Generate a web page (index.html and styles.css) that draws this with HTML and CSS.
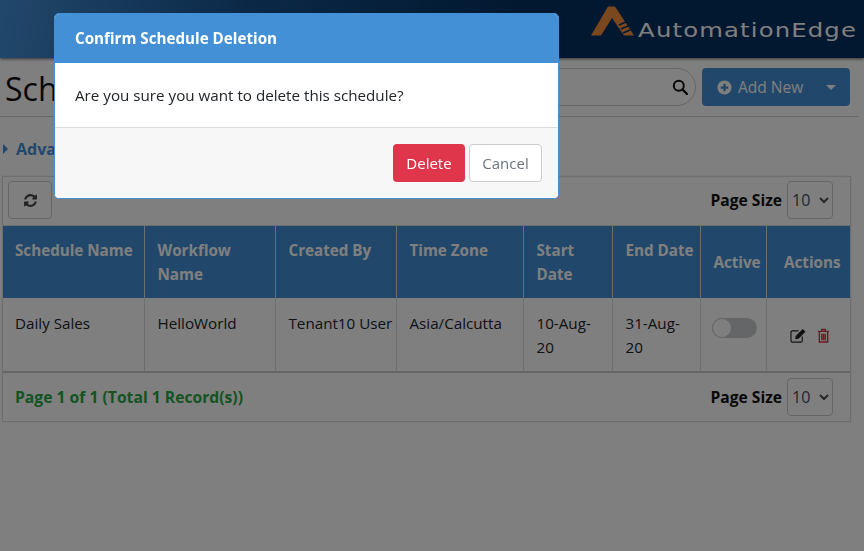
FILE: index.html
```html
<!DOCTYPE html>
<html lang="en">

<head>
    <meta charset="UTF-8">
    <title>Schedules</title>
    <link rel="stylesheet" href="styles.css">
</head>

<body>
    <header class="topbar">
        <div class="logo">
            <svg class="logo-mark" viewBox="0 0 44 30" width="44" height="30">
                <path d="M0 29.500 L17 0.500 H24 L43 29.500 H33 L21 12 L10 29.500 Z" fill="#f58f3c" />
                <path d="M28 19 L35 16 M30 23 L37 20 M32 27 L39 24" stroke="#023060" stroke-width="1.500" />
            </svg>
            <span class="logo-text">AutomationEdge</span>
        </div>
    </header>

    <main class="content">
        <div class="title-row">
            <h1>Schedules</h1>
            <div class="title-tools">
                <div class="search-box">
                    <svg viewBox="0 0 16 16" width="16" height="16">
                        <circle cx="6.800" cy="6.800" r="5" fill="none" stroke="#111" stroke-width="2" />
                        <path d="M10.500 10.500 L15 15" stroke="#111" stroke-width="2.400" stroke-linecap="round" />
                    </svg>
                </div>
                <button class="add-btn">
                    <svg viewBox="0 0 16 16" width="15" height="15">
                        <circle cx="8" cy="8" r="7.500" fill="#fff" />
                        <path d="M8 4 V12 M4 8 H12" stroke="#4390d6" stroke-width="2.400" />
                    </svg>
                    <span class="add-label">Add New</span>
                    <span class="caret"></span>
                </button>
            </div>
        </div>

        <div class="advanced"><span class="caret-right"></span>Advanced Search</div>

        <section class="panel">
            <div class="panel-bar">
                <button class="refresh-btn">
                    <svg viewBox="0 0 1792 1792" width="15" height="15">
                        <path fill="#444" d="M1639 1056q0 5-1 7-64 268-268 434.5t-478 166.5q-146 0-282.5-55t-243.5-157l-129 129q-19 19-45 19t-45-19-19-45v-448q0-26 19-45t45-19h448q26 0 45 19t19 45-19 45l-137 137q71 66 161 102t187 36q134 0 250-65t186-179q11-17 53-117 8-23 30-23h192q13 0 22.5 9.5t9.5 22.5zm25-800v448q0 26-19 45t-45 19h-448q-26 0-45-19t-19-45 19-45l138-138q-148-137-349-137-134 0-250 65t-186 179q-11 17-53 117-8 23-30 23h-199q-13 0-22.5-9.5t-9.5-22.5v-7q65-268 270-434.5t480-166.5q146 0 284 55.5t245 156.5l130-129q19-19 45-19t45 19 19 45z" />
                    </svg>
                </button>
                <div class="page-size">
                    <label>Page Size</label>
                    <select class="size-select">
                        <option>10</option>
                    </select>
                </div>
            </div>

            <table class="grid">
                <colgroup>
                    <col class="c-name">
                    <col class="c-flow">
                    <col class="c-user">
                    <col class="c-zone">
                    <col class="c-start">
                    <col class="c-end">
                    <col class="c-active">
                    <col class="c-actions">
                </colgroup>
                <thead>
                    <tr>
                        <th class="top">Schedule Name</th>
                        <th class="top">Workflow<br>Name</th>
                        <th class="top">Created By</th>
                        <th class="top">Time Zone</th>
                        <th class="top">Start<br>Date</th>
                        <th class="top">End Date</th>
                        <th class="mid">Active</th>
                        <th class="mid">Actions</th>
                    </tr>
                </thead>
                <tbody>
                    <tr>
                        <td>Daily Sales</td>
                        <td>HelloWorld</td>
                        <td class="nowrap">Tenant10 User</td>
                        <td>Asia/Calcutta</td>
                        <td>10-Aug-20</td>
                        <td>31-Aug-20</td>
                        <td class="cell-toggle"><span class="toggle"><span class="knob"></span></span></td>
                        <td class="cell-actions">
                            <svg viewBox="0 0 18 16" width="17" height="15">
                                <path d="M13 9 V13.500 A1.500 1.500 0 0 1 11.500 15 H2.500 A1.500 1.500 0 0 1 1 13.500 V4.500 A1.500 1.500 0 0 1 2.500 3 H9" fill="none" stroke="#222" stroke-width="1.200" />
                                <path d="M6 8.500 L13.500 1 L16.500 4 L9 11.500 L5.500 12 Z" fill="#222" />
                            </svg>
                            <svg viewBox="0 0 14 16" width="13" height="15">
                                <path d="M1 3.500 H13 M5 3 V1.500 H9 V3 M2.500 4 V15 H11.500 V4 M5.200 6 V13 M7 6 V13 M8.800 6 V13" fill="none" stroke="#dc3545" stroke-width="1.500" />
                            </svg>
                        </td>
                    </tr>
                </tbody>
            </table>

            <div class="panel-foot">
                <span class="records">Page 1 of 1 (Total 1 Record(s))</span>
                <div class="page-size">
                    <label>Page Size</label>
                    <select class="size-select">
                        <option>10</option>
                    </select>
                </div>
            </div>
        </section>
    </main>

    <div class="overlay">
        <div class="modal">
            <div class="modal-head">Confirm Schedule Deletion</div>
            <div class="modal-body">Are you sure you want to delete this schedule?</div>
            <div class="modal-foot">
                <button class="btn btn-danger">Delete</button>
                <button class="btn btn-plain">Cancel</button>
            </div>
        </div>
    </div>
</body>

</html>
```

FILE: styles.css
```css
* {
    box-sizing: border-box;
    margin: 0;
    padding: 0;
}

html,
body {
    height: 100%;
    overflow: hidden;
}

body {
    font-family: 'Open Sans', 'Noto Sans', sans-serif;
    font-size: 15.2px;
    line-height: 24px;
    color: #212529;
    background-color: #fff;
}

button,
select {
    font-family: inherit;
}

.topbar {
    height: 58px;
    display: flex;
    justify-content: flex-end;
    background: linear-gradient(100deg, #4390d6 0%, #17528f 28%, #023060 60%, #023060 100%);
    box-shadow: 0 1px 3px rgba(0, 0, 0, 0.6);
}

.logo {
    display: flex;
    align-items: flex-start;
    padding: 6px 7px 0 0;
}

.logo-text {
    margin: 9px 0 0 51px;
    font-family: 'DejaVu Sans', sans-serif;
    font-size: 19px;
    line-height: 30px;
    letter-spacing: 0.9px;
    color: #fff;
    transform: scaleX(1.28);
    transform-origin: right center;
}

.content {
    padding: 10px 6px 0 2px;
}

.title-row {
    height: 49px;
    display: flex;
    justify-content: space-between;
    align-items: flex-start;
    margin-left: -2px;
    padding: 0 8px 0 5px;
    border-bottom: 1px solid #ccc;
}

h1 {
    font-size: 32px;
    font-weight: 400;
    line-height: 42px;
    color: #111;
}

.title-tools {
    display: flex;
    gap: 6px;
}

.search-box {
    width: 300px;
    height: 38px;
    display: flex;
    align-items: center;
    justify-content: flex-end;
    padding-right: 7px;
    border: 1px solid #ccc;
    border-radius: 19px;
}

.add-btn {
    width: 148px;
    height: 38px;
    display: flex;
    align-items: center;
    padding: 0 14px 0 15px;
    border: none;
    border-radius: 4px;
    background-color: #4390d6;
    color: #fff;
    font-size: 15.500px;
}

.add-label {
    margin-left: 6px;
    flex: 1;
    text-align: left;
}

.caret {
    width: 0;
    height: 0;
    border-left: 5px solid transparent;
    border-right: 5px solid transparent;
    border-top: 5px solid #fff;
}

.advanced {
    height: 59px;
    padding-top: 20px;
    margin-left: 1px;
    font-size: 16px;
    font-weight: 700;
    color: #4390d6;
}

.caret-right {
    display: inline-block;
    margin-right: 8px;
    vertical-align: 1px;
    border-top: 5px solid transparent;
    border-bottom: 5px solid transparent;
    border-left: 5px solid #4390d6;
}

.panel {
    width: 849px;
    border: 1px solid #ddd;
    box-shadow: 0 0 2px rgba(0, 0, 0, 0.1);
}

.panel-bar {
    display: flex;
    justify-content: space-between;
    align-items: flex-start;
    height: 49px;
    padding: 4px 17px 0 5px;
    border-bottom: 1px solid #ddd;
}

.panel-foot {
    display: flex;
    justify-content: space-between;
    align-items: center;
    height: 48px;
    padding: 0 17px 0 12px;
}

.refresh-btn {
    width: 44px;
    height: 38px;
    display: flex;
    align-items: center;
    justify-content: center;
    border: 1px solid #ccc;
    border-radius: 4px;
    background-color: #fff;
}

.page-size {
    display: flex;
    align-items: center;
    gap: 5px;
}

.page-size label {
    font-size: 15.600px;
    font-weight: 700;
    color: #111;
}

.size-select {
    width: 46px;
    height: 38px;
    border: 1px solid #ccc;
    border-radius: 4px;
    background-color: #fff;
    font-size: 16px;
    color: #495057;
}

.grid {
    width: 100%;
    table-layout: fixed;
    border-collapse: collapse;
}

.c-name { width: 141px; }
.c-flow { width: 131px; }
.c-user { width: 121px; }
.c-zone { width: 127px; }
.c-start { width: 89px; }
.c-end { width: 88px; }
.c-active { width: 66px; }
.c-actions { width: 84px; }

.grid th {
    height: 72px;
    padding: 12px 4px 12px 13px;
    text-align: left;
    font-weight: 700;
    color: #fff;
    background-color: #4390d6;
    border-left: 1px solid #ddd;
}

.grid th:first-child,
.grid td:first-child {
    padding-left: 12px;
    border-left: none;
}

.grid th.top {
    vertical-align: top;
}

.grid th.mid {
    text-align: center;
    padding: 12px 0 12px 8px;
    vertical-align: middle;
}

.grid td {
    height: 74px;
    padding: 13px 5px 11px 13px;
    vertical-align: top;
    border-left: 1px solid #ddd;
    border-bottom: 2px solid #ccc;
}

.grid td.nowrap {
    white-space: nowrap;
}

.grid td.cell-toggle {
    text-align: center;
    padding: 20px 0 0 2px;
}

.grid td.cell-actions {
    text-align: center;
    padding: 30px 0 0 3px;
}

.cell-actions svg {
    margin: 0 3px;
    vertical-align: top;
}

.toggle {
    display: inline-block;
    width: 45px;
    height: 20px;
    border-radius: 10px;
    background-color: #c8ccd0;
    vertical-align: top;
}

.knob {
    display: block;
    width: 20px;
    height: 20px;
    border: 1px solid #c8ccd0;
    border-radius: 50%;
    background-color: #fff;
}

.records {
    font-size: 15.700px;
    font-weight: 700;
    color: #28a745;
}

.overlay {
    position: fixed;
    inset: 0;
    background-color: rgba(0, 0, 0, 0.5);
}

.modal {
    width: 505px;
    margin: 13px 0 0 54px;
    border: 1px solid #4390d6;
    border-radius: 5px;
    overflow: hidden;
    background-color: #fff;
}

.modal-head {
    height: 49px;
    padding: 12px 20px;
    background-color: #4390d6;
    color: #fff;
    font-weight: 700;
}

.modal-body {
    height: 65px;
    padding: 20px;
    border-bottom: 1px solid #ddd;
}

.modal-foot {
    height: 70px;
    display: flex;
    justify-content: flex-end;
    gap: 4px;
    padding: 16px 16px 0 0;
    background-color: #f7f7f7;
}

.btn {
    height: 38px;
    padding: 0 12px;
    border-radius: 4px;
    font-size: 15px;
}

.btn-danger {
    width: 72px;
    border: none;
    background-color: #e0364c;
    color: #fff;
}

.btn-plain {
    width: 73px;
    border: 1px solid #ccc;
    background-color: #fff;
    color: #6c757d;
}
```
